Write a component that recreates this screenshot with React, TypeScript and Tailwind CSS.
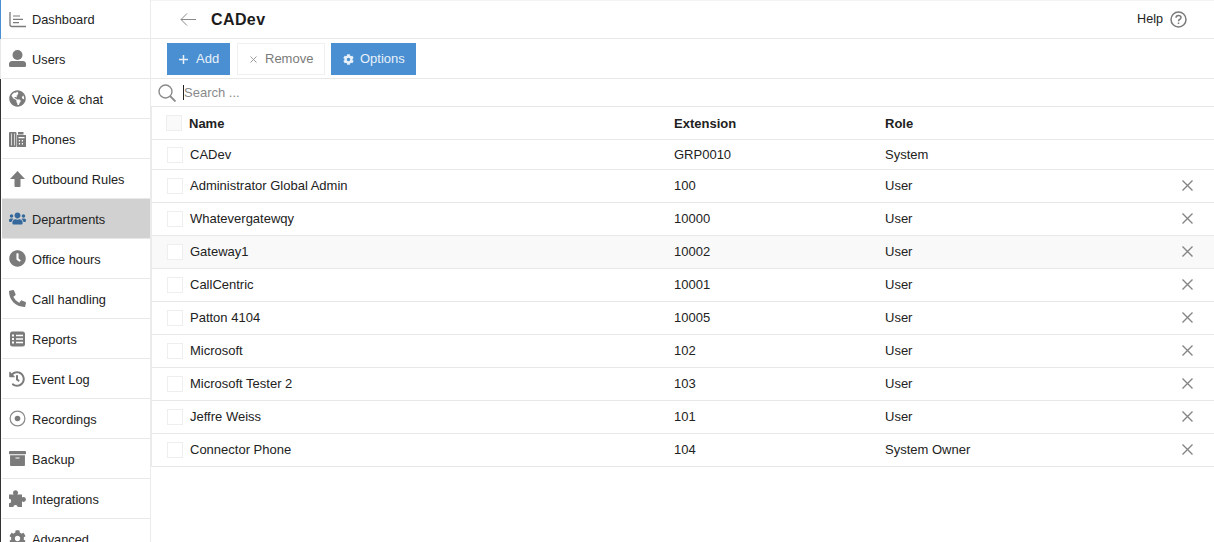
import React from "react";
import {
  FaGlobeAmericas,
  FaUsers,
  FaClock,
  FaPhone,
  FaHistory,
  FaArchive,
  FaCog,
} from "react-icons/fa";

const DashIcon = () => (
  <svg width="17" height="17" viewBox="0 0 17 17" fill="none" stroke="#7b7b7b" strokeWidth="1.300">
    <path d="M1 1V13.500Q1 15.500 3 15.500H17" />
    <path d="M4 5H11M4 8.300H14M4 11.600H10" strokeWidth="1.200" />
  </svg>
);

const UserIcon = () => (
  <svg width="17" height="17" viewBox="0 0 17 17" fill="#7b7b7b">
    <circle cx="8.500" cy="5" r="5" />
    <path d="M0 14Q0 11.300 3 11H14Q17 11.300 17 14V15.500Q17 17 15.500 17H1.500Q0 17 0 15.500Z" />
  </svg>
);

const PhonesIcon = () => (
  <svg width="17" height="16" viewBox="0 0 17 16" fill="#7b7b7b">
    <path d="M0 2Q0 1 1 1H6.500Q7.500 1 7.500 2V15Q7.500 16 6.500 16H1Q0 16 0 15Z" />
    <path d="M8 4H17V15.500Q17 16 16.500 16H8Z" />
    <path d="M9 1H14.500V3.500H9Z" />
    <path fill="#fff" d="M2.300 2.500H3V14.500H2.300ZM5 2.500H5.700V14.500H5ZM9.500 6H15.500V7.300H9.500ZM9.800 9H11V10.500H9.800ZM12.800 9H14V10.500H12.800ZM9.800 12H11V13.500H9.800ZM12.800 12H14V13.500H12.800Z" />
  </svg>
);

const ArrowIcon = () => (
  <svg width="17" height="16" viewBox="0 0 17 16" fill="#7b7b7b">
    <path d="M8.500 0L16 8H11.500V15Q11.500 16 10.500 16H6.500Q5.500 16 5.500 15V8H1Z" />
  </svg>
);

const ReportsIcon = () => (
  <svg width="17" height="16" viewBox="0 0 17 16" fill="#7b7b7b">
    <rect x="1" y="0.500" width="15" height="15" rx="2.500" />
    <path fill="#fff" d="M3 3.500H5V5.500H3ZM7 3.800H14V5.200H7ZM3 7H5V9H3ZM7 7.300H14V8.700H7ZM3 10.500H5V12.500H3ZM7 10.800H14V12.200H7Z" />
  </svg>
);

const RecordIcon = () => (
  <svg width="17" height="17" viewBox="0 0 17 17" fill="none" stroke="#8a8a8a" strokeWidth="1.200">
    <circle cx="8.500" cy="8.500" r="7.400" />
    <circle cx="8.500" cy="8.500" r="2.800" fill="#7b7b7b" stroke="none" />
  </svg>
);

const PuzzleIcon = () => (
  <svg width="17" height="17" viewBox="0 0 17 17" fill="#7b7b7b">
    <circle cx="6.500" cy="2.800" r="2.500" />
    <circle cx="14.500" cy="9.500" r="2.400" />
    <path d="M0 4.500H13V17H0Z" />
    <circle cx="0" cy="11" r="2.200" fill="#fff" />
    <circle cx="6.500" cy="17.300" r="2.200" fill="#fff" />
  </svg>
);

const nav: { label: string; icon: React.ReactNode }[] = [
  { label: "Dashboard", icon: <DashIcon /> },
  { label: "Users", icon: <UserIcon /> },
  { label: "Voice & chat", icon: <FaGlobeAmericas size={17} /> },
  { label: "Phones", icon: <PhonesIcon /> },
  { label: "Outbound Rules", icon: <ArrowIcon /> },
  { label: "Departments", icon: <FaUsers size={17} className="text-[#35699c]" /> },
  { label: "Office hours", icon: <FaClock size={17} /> },
  { label: "Call handling", icon: <FaPhone size={17} className="-scale-x-100" /> },
  { label: "Reports", icon: <ReportsIcon /> },
  { label: "Event Log", icon: <FaHistory size={16} /> },
  { label: "Recordings", icon: <RecordIcon /> },
  { label: "Backup", icon: <FaArchive size={17} /> },
  { label: "Integrations", icon: <PuzzleIcon /> },
  { label: "Advanced", icon: <FaCog size={17} /> },
];

const rows = [
  { name: "Administrator Global Admin", ext: "100", role: "User" },
  { name: "Whatevergatewqy", ext: "10000", role: "User" },
  { name: "Gateway1", ext: "10002", role: "User", hover: true },
  { name: "CallCentric", ext: "10001", role: "User" },
  { name: "Patton 4104", ext: "10005", role: "User" },
  { name: "Microsoft", ext: "102", role: "User" },
  { name: "Microsoft Tester 2", ext: "103", role: "User" },
  { name: "Jeffre Weiss", ext: "101", role: "User" },
  { name: "Connector Phone", ext: "104", role: "System Owner" },
];

const Check = ({ header }: { header?: boolean }) => (
  <span
    className={
      "block h-[16px] w-[16px] border border-[#eeeeee] " + (header ? "bg-[#fafafa]" : "bg-white")
    }
  />
);

const RemoveX = () => (
  <svg width="11" height="11" viewBox="0 0 11 11" stroke="#858585" strokeWidth="1.400" className="block">
    <path d="M0.500 0.500L10.500 10.500M10.500 0.500L0.500 10.500" />
  </svg>
);

export default function App() {
  return (
    <div className="flex h-[542px] w-[1214px] overflow-hidden bg-white font-['Liberation_Sans',sans-serif] text-[13px] text-[#222222]">
      <aside className="w-[151px] shrink-0 border-r border-[#ebebeb]">
        {nav.map((item, i) => (
          <div
            key={item.label}
            className={
              (i === 0 ? "h-[39px] " : "h-[40px] ") +
              "border-l " +
              (i === 0 ? "border-l-[#4a8fd1]" : i === 1 ? "border-l-[#e8e8e8]" : "border-l-[#333333]")
            }
          >
            <div
              className={
                "ml-px flex h-full items-center border-b border-[#e8e8e8] pl-[7px] text-[12.8px] " +
                (item.label === "Departments" ? "bg-[#d1d1d1]" : "")
              }
            >
              <span className="flex w-[23px] shrink-0 items-center text-[#7b7b7b]">{item.icon}</span>
              <span className="pt-[2px]">{item.label}</span>
            </div>
          </div>
        ))}
      </aside>

      <main className="min-w-0 flex-1">
        <header className="flex h-[39px] items-center justify-between border-t border-b border-t-[#f4f4f4] border-b-[#e8e8e8] pr-[27px] pl-[29px]">
          <div className="flex items-center">
            <svg width="16" height="13" viewBox="0 0 16 13" fill="none" stroke="#8a8a8a" strokeWidth="1">
              <path d="M16 6.500H1M7 0.500L1 6.500L7 12.500" />
            </svg>
            <h1 className="ml-[15px] text-[16px] font-bold tracking-[0.4px] text-[#1c1c1c]">CADev</h1>
          </div>
          <div className="flex items-center gap-[7px]">
            <span className="text-[12.6px]">Help</span>
            <svg width="17" height="17" viewBox="0 0 17 17" fill="none" stroke="#7b7b7b" strokeWidth="1.500">
              <circle cx="8.500" cy="8.500" r="7.500" />
              <path d="M6 6.800Q6 4.500 8.500 4.500Q11 4.500 11 6.500Q11 7.800 9.500 8.500Q8.500 9 8.500 10.300" />
              <path d="M8.500 11.500V13" />
            </svg>
          </div>
        </header>

        <div className="flex h-[40px] items-start border-b border-[#e8e8e8] pt-[4px] pl-[16px]">
          <button className="flex h-[32px] w-[63px] items-center gap-[8px] bg-[#4a8fd1] pl-[12px] text-[#e8f1fa]">
            <svg width="9" height="9" viewBox="0 0 9 9" stroke="#e8f1fa" strokeWidth="1.500">
              <path d="M4.500 0V9M0 4.500H9" />
            </svg>
            Add
          </button>
          <button className="ml-[7px] flex h-[32px] w-[88px] items-center gap-[8px] border border-[#f0f0f0] bg-white pl-[12px] text-[#7b7b7b]">
            <svg width="7" height="7" viewBox="0 0 7 7" stroke="#9a9a9a" strokeWidth="1">
              <path d="M0.500 0.500L6.500 6.500M6.500 0.500L0.500 6.500" />
            </svg>
            Remove
          </button>
          <button className="ml-[6px] flex h-[32px] w-[85px] items-center gap-[6px] bg-[#4a8fd1] pl-[12px] text-[#e8f1fa]">
            <FaCog size={11} />
            Options
          </button>
        </div>

        <div className="flex h-[28px] items-center border-b border-[#e8e8e8] pl-[7px]">
          <svg width="18" height="18" viewBox="0 0 18 18" fill="none" stroke="#8a8a8a" strokeWidth="1.400">
            <circle cx="7.500" cy="7.500" r="6.500" />
            <path d="M12 12L17.500 17.500" strokeWidth="1.800" />
          </svg>
          <span className="ml-[7px] h-[15px] w-px bg-[#222222]" />
          <span className="text-[#8a8a8a]">Search ...</span>
        </div>

        <div className="w-full border-l border-[#ebebeb]">
          <div className="flex h-[33px] items-center border-b border-[#e8e8e8] font-bold">
            <span className="w-[37px] shrink-0 pl-[14px]">
              <Check header />
            </span>
            <span className="w-[485px] shrink-0 pt-[2px]">Name</span>
            <span className="w-[211px] shrink-0 pt-[2px]">Extension</span>
            <span className="pt-[2px]">Role</span>
          </div>
          <div className="flex h-[30px] items-center border-b border-[#e8e8e8]">
            <span className="w-[38px] shrink-0 pl-[15px]">
              <Check />
            </span>
            <span className="w-[484px] shrink-0">CADev</span>
            <span className="w-[211px] shrink-0">GRP0010</span>
            <span>System</span>
          </div>
          {rows.map((r) => (
            <div
              key={r.name}
              className={
                "flex h-[33px] items-center border-b border-[#e8e8e8] pb-px " + (r.hover ? "bg-[#f9f9f9]" : "")
              }
            >
              <span className="w-[38px] shrink-0 pl-[15px]">
                <Check />
              </span>
              <span className="w-[484px] shrink-0">{r.name}</span>
              <span className="w-[211px] shrink-0">{r.ext}</span>
              <span className="flex-1">{r.role}</span>
              <span className="mr-[21px]">
                <RemoveX />
              </span>
            </div>
          ))}
        </div>
      </main>
    </div>
  );
}
